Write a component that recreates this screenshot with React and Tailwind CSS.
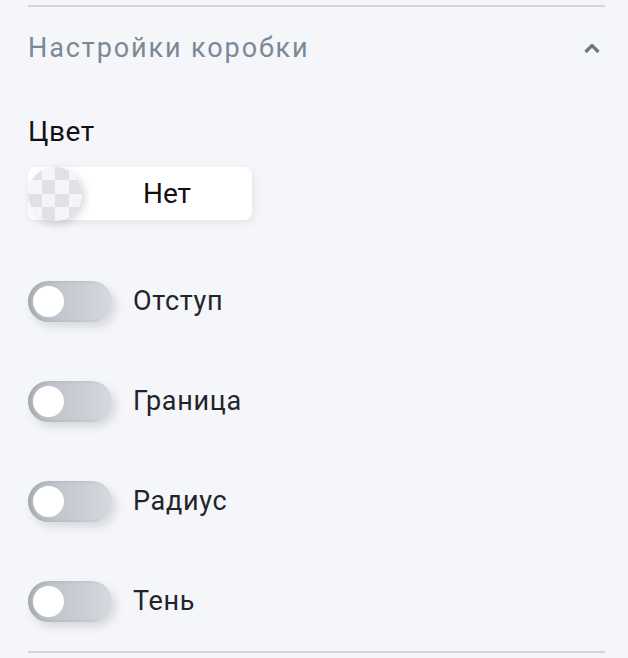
import { useState } from "react";

function Toggle({ label }) {
  const [on, setOn] = useState(false);
  return (
    <div className="flex h-[41px] items-center">
      <button
        onClick={() => setOn(!on)}
        className="relative h-[41px] w-[84px] rounded-full bg-gradient-to-r from-[#b7bcc2] to-[#d5dae0] shadow-[inset_3px_0_4px_rgba(0,0,0,0.12),4px_5px_10px_rgba(0,0,0,0.12)]"
      >
        <span
          className={
            on
              ? "absolute left-[49px] top-[5px] h-[31px] w-[31px] rounded-full bg-white"
              : "absolute left-[5px] top-[5px] h-[31px] w-[31px] rounded-full bg-white"
          }
        />
      </button>
      <span className="ml-[21px] text-[27px] tracking-[0.7px] text-[#222429]">{label}</span>
    </div>
  );
}

export default function App() {
  const cells = Array.from({ length: 16 });
  return (
    <div className="min-h-[658px] bg-[#f5f6fa] px-[28px] pt-[5px] font-['Roboto',sans-serif]">
      <div className="mr-[-5px] border-t-2 border-[#d3d5da]" />

      {/* Header */}
      <div className="flex h-[82px] items-center justify-between">
        <h2 className="text-[27px] tracking-[1.9px] text-[#7b8997]">Настройки коробки</h2>
        <svg className="mr-[-1px] h-[13px] w-[18px] text-[#6d7886]" viewBox="0 0 18 13" fill="none">
          <path d="M2.5 10L9 3.5L15.5 10" stroke="currentColor" strokeWidth="3.2" strokeLinejoin="round" />
        </svg>
      </div>

      {/* Colour */}
      <div className="mt-[28px] text-[28px] leading-[30px] tracking-[0.5px] text-[#111]">Цвет</div>
      <div className="relative mt-5 flex h-[53px] w-[224px] items-center rounded-lg bg-white shadow-[2px_3px_8px_rgba(0,0,0,0.07)]">
        <div className="grid h-[54px] w-[54px] shrink-0 grid-cols-4 overflow-hidden rounded-full shadow-[3px_3px_8px_rgba(0,0,0,0.15)]">
          {cells.map((_, i) => (
            <div
              key={i}
              className={(Math.floor(i / 4) + i) % 2 === 0 ? "bg-[#e0e1e4]" : "bg-[#f4f5f8]"}
            />
          ))}
        </div>
        <span className="flex-1 text-center text-[28px] text-[#111]">Нет</span>
      </div>

      {/* Toggles */}
      <div className="mt-[61px] flex flex-col gap-[59px]">
        <Toggle label="Отступ" />
        <Toggle label="Граница" />
        <Toggle label="Радиус" />
        <Toggle label="Тень" />
      </div>

      <div className="mr-[-5px] mt-[29px] border-t-2 border-[#d3d5da]" />
    </div>
  );
}
